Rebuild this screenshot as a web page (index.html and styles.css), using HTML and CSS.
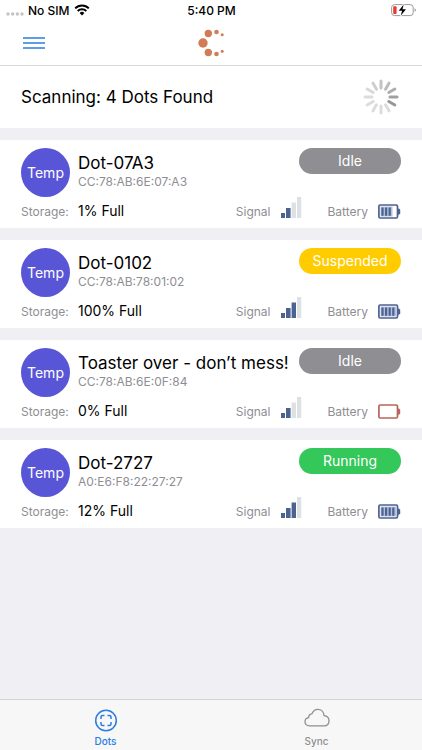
FILE: index.html
```html
<!DOCTYPE html>
<html lang="en">
<head>
<meta charset="utf-8">
<meta name="viewport" content="width=device-width, initial-scale=1">
<title>Dots</title>
<link rel="stylesheet" href="styles.css">
</head>
<body>
<svg class="defs" aria-hidden="true">
  <symbol id="bars" viewBox="0 0 21 21">
    <rect x="0" y="16" width="4" height="5"/>
    <rect x="5" y="11" width="4.6" height="10"/>
  </symbol>
  <symbol id="signal-2" viewBox="0 0 21 21">
    <use href="#bars" width="21" height="21" fill="#4c6290"/>
    <path d="M10.600 5.500h4.400V21h-4.400zM16 0h4.200v21H16z" fill="#dde1e3"/>
  </symbol>
  <symbol id="signal-3" viewBox="0 0 21 21">
    <use href="#bars" width="21" height="21" fill="#4c6290"/>
    <path d="M10.600 5.500h4.400V21h-4.400z" fill="#4c6290"/>
    <path d="M16 0h4.200v21H16z" fill="#dde1e3"/>
  </symbol>
  <symbol id="shell" viewBox="0 0 23 15">
    <rect x=".9" y="1" width="18.600" height="13" rx="1.300" fill="none" stroke="currentColor" stroke-width="1.700"/>
    <path d="M20 4.500h1l1.200 1.300v3.600L21 10.800h-1z" fill="currentColor"/>
  </symbol>
  <symbol id="battery-3" viewBox="0 0 23 15">
    <path d="M2.500 2.500h12v10h-12z" fill="#b4c0dc"/>
    <use href="#shell" width="23" height="15"/>
    <path d="M4.500 3.500v8.200M8.100 3.500v8.200M11.700 3.500v8.200" stroke="currentColor" stroke-width="2.200"/>
  </symbol>
  <symbol id="battery-4" viewBox="0 0 23 15">
    <path d="M2.500 2.500h15.500v10h-15.500z" fill="#b4c0dc"/>
    <use href="#shell" width="23" height="15"/>
    <path d="M4.500 3.500v8.200M8.100 3.500v8.200M11.700 3.500v8.200M15.300 3.500v8.200" stroke="currentColor" stroke-width="2.200"/>
  </symbol>
</svg>

<div class="app">
  <header class="top">
    <div class="status">
      <div class="carrier">
        <svg class="no-signal" viewBox="0 0 18 4" aria-hidden="true"><g fill="#c4c4c6"><circle cx="2" cy="2" r="1.700"/><circle cx="6.700" cy="2" r="1.700"/><circle cx="11.400" cy="2" r="1.700"/><circle cx="16" cy="2" r="1.700"/></g></svg>
        <span>No SIM</span>
        <svg class="wifi" viewBox="0 0 16 12" aria-hidden="true"><g fill="none" stroke="#000" stroke-width="2"><path d="M1.200 4.400a9.600 9.600 0 0 1 13.600 0"/><path d="M3.700 7a6.100 6.100 0 0 1 8.600 0"/></g><path d="M5.600 9a3.400 3.400 0 0 1 4.800 0L8 11.500z"/></svg>
      </div>
      <time class="clock">5:40 PM</time>
      <svg class="power" viewBox="0 0 26 13" aria-hidden="true"><rect x=".6" y=".6" width="21.600" height="11" rx="3" fill="none" stroke="#9a9a9d"/><path d="M23.600 4.300c1.800.8 1.800 2.800 0 3.600z" fill="#9a9a9d"/><rect x="2.200" y="2.200" width="3.400" height="7.800" rx="1" fill="#ea3a31"/><path d="M12.700.5 7.700 6.700h3.400l-1.400 5 5.300-6.400h-3.500z" stroke="#fff" stroke-width="1.500" paint-order="stroke"/></svg>
    </div>
    <nav class="nav">
      <button class="menu" aria-label="Menu">
        <svg viewBox="0 0 22 13" aria-hidden="true"><path d="M0 2h22M0 7h22M0 12h22" stroke="#2b7de0" stroke-width="1.500"/></svg>
      </button>
      <svg class="logo" viewBox="0 0 28 28" aria-hidden="true"><g fill="#d17c56"><circle cx="6" cy="14" r="4.700"/><circle cx="11.300" cy="4.500" r="3.700"/><circle cx="11.300" cy="23.500" r="3.700"/><circle cx="19.500" cy="3" r="2.300"/><circle cx="19.500" cy="25" r="2.300"/><circle cx="25.200" cy="5.800" r="1.500"/><circle cx="25.200" cy="22.200" r="1.500"/></g></svg>
    </nav>
  </header>

  <main>
    <section class="scan">
      <h1>Scanning: 4 Dots Found</h1>
      <svg class="spinner" viewBox="-18 -18 36 36" role="img" aria-label="Scanning"><g stroke-width="3" stroke-linecap="round">
        <path d="M0-9v-7" stroke="#c4c4c4"/>
        <path d="M0-9v-7" stroke="#bcbcbc" transform="rotate(30)"/>
        <path d="M0-9v-7" stroke="#adadad" transform="rotate(60)"/>
        <path d="M0-9v-7" stroke="#a0a0a2" transform="rotate(90)"/>
        <path d="M0-9v-7" stroke="#97979a" transform="rotate(120)"/>
        <path d="M0-9v-7" stroke="#dcdcdc" transform="rotate(150)"/>
        <path d="M0-9v-7" stroke="#dcdcdc" transform="rotate(180)"/>
        <path d="M0-9v-7" stroke="#dcdcdc" transform="rotate(210)"/>
        <path d="M0-9v-7" stroke="#dcdcdc" transform="rotate(240)"/>
        <path d="M0-9v-7" stroke="#dcdcdc" transform="rotate(270)"/>
        <path d="M0-9v-7" stroke="#d8d8d8" transform="rotate(300)"/>
        <path d="M0-9v-7" stroke="#cecece" transform="rotate(330)"/>
      </g></svg>
    </section>

    <article class="card">
      <div class="head">
        <span class="kind">Temp</span>
        <div class="ident"><h2>Dot-07A3</h2><p>CC:78:AB:6E:07:A3</p></div>
        <span class="state">Idle</span>
      </div>
      <div class="facts">
        <span class="label">Storage:</span><span class="value">1% Full</span>
        <div class="reading"><span class="label">Signal</span><svg class="signal" aria-hidden="true"><use href="#signal-2"/></svg></div>
        <div class="reading"><span class="label">Battery</span><svg class="battery" aria-hidden="true"><use href="#battery-3"/></svg></div>
      </div>
    </article>

    <article class="card">
      <div class="head">
        <span class="kind">Temp</span>
        <div class="ident"><h2>Dot-0102</h2><p>CC:78:AB:78:01:02</p></div>
        <span class="state suspended">Suspended</span>
      </div>
      <div class="facts">
        <span class="label">Storage:</span><span class="value">100% Full</span>
        <div class="reading"><span class="label">Signal</span><svg class="signal" aria-hidden="true"><use href="#signal-3"/></svg></div>
        <div class="reading"><span class="label">Battery</span><svg class="battery" aria-hidden="true"><use href="#battery-4"/></svg></div>
      </div>
    </article>

    <article class="card">
      <div class="head">
        <span class="kind">Temp</span>
        <div class="ident"><h2>Toaster over - don’t mess!</h2><p>CC:78:AB:6E:0F:84</p></div>
        <span class="state">Idle</span>
      </div>
      <div class="facts">
        <span class="label">Storage:</span><span class="value">0% Full</span>
        <div class="reading"><span class="label">Signal</span><svg class="signal" aria-hidden="true"><use href="#signal-2"/></svg></div>
        <div class="reading"><span class="label">Battery</span><svg class="battery low" aria-hidden="true"><use href="#shell"/></svg></div>
      </div>
    </article>

    <article class="card">
      <div class="head">
        <span class="kind">Temp</span>
        <div class="ident"><h2>Dot-2727</h2><p>A0:E6:F8:22:27:27</p></div>
        <span class="state running">Running</span>
      </div>
      <div class="facts">
        <span class="label">Storage:</span><span class="value">12% Full</span>
        <div class="reading"><span class="label">Signal</span><svg class="signal" aria-hidden="true"><use href="#signal-3"/></svg></div>
        <div class="reading"><span class="label">Battery</span><svg class="battery" aria-hidden="true"><use href="#battery-4"/></svg></div>
      </div>
    </article>
  </main>

  <nav class="tabs">
    <a class="tab current" href="#dots" aria-current="page">
      <svg viewBox="0 0 26 24" aria-hidden="true"><g fill="none" stroke="currentColor" stroke-width="1.500"><circle cx="13" cy="12.500" r="10.300"/><path d="M8 11V9Q8 7.500 9.500 7.500h2M14.500 7.500h2Q18 7.500 18 9v2M18 14v2q0 1.500-1.500 1.500h-2M11.500 17.500h-2Q8 17.500 8 16v-2"/></g></svg>
      <span>Dots</span>
    </a>
    <a class="tab" href="#sync">
      <svg viewBox="0 0 26 24" aria-hidden="true"><path d="M5.500 17.800C2.600 17.800 1 16.100 1 13.700c0-2.200 1.500-3.800 3.600-4.100C4.700 7.100 6.200 5.700 8 5.800c1.100-2.800 3.200-4.400 5.800-4.400 3.500 0 6.100 2.600 6.200 6.300 3.100.4 5 2.400 5 5 0 3-2 5.100-4.900 5.100z" fill="none" stroke="currentColor" stroke-width="1.300" stroke-linejoin="round"/></svg>
      <span>Sync</span>
    </a>
  </nav>
</div>
</body>
</html>
```
FILE: styles.css
```css
* {
  box-sizing: border-box;
}

body {
  margin: 0;
  font-family: Inter, "Liberation Sans", sans-serif;
  color: #000;
  background: #efeff4;
}

h1, h2, p {
  margin: 0;
  font-weight: 400;
}

svg {
  display: block;
  flex: none;
}

.defs {
  position: absolute;
  width: 0;
  height: 0;
}

.app {
  display: flex;
  flex-direction: column;
  min-height: 100vh;
}

.top {
  background: #fff;
  border-bottom: 1px solid #d8d8da;
}

.status {
  display: grid;
  grid-template-columns: 1fr auto 1fr;
  align-items: center;
  height: 20px;
  padding: 0 5px 0 6px;
  font-size: 12px;
  font-weight: 500;
}

.carrier {
  display: flex;
  align-items: center;
  gap: 4px;
}

.no-signal {
  width: 18px;
  height: 4px;
  margin-top: 8px;
}

.wifi {
  width: 16px;
  height: 12px;
}

.power {
  width: 26px;
  height: 13px;
  justify-self: end;
}

.nav {
  display: grid;
  grid-template-columns: 1fr auto 1fr;
  align-items: center;
  height: 45px;
  padding: 0 21px;
}

.menu {
  justify-self: start;
  padding: 2px;
  border: 0;
  background: none;
}

.menu svg {
  width: 22px;
  height: 13px;
}

.logo {
  width: 28px;
  height: 28px;
}

.scan {
  display: flex;
  align-items: center;
  justify-content: space-between;
  height: 62px;
  padding: 0 23px 0 21px;
  background: #fff;
}

.scan h1 {
  font-size: 17px;
}

.spinner {
  width: 36px;
  height: 36px;
}

.card {
  margin-top: 12px;
  padding: 8px 21px 7px;
  background: #fff;
}

.head {
  display: flex;
  align-items: flex-start;
  gap: 8px;
}

.kind {
  flex: none;
  width: 49px;
  height: 49px;
  border-radius: 50%;
  background: #5856d6;
  color: #fff;
  font-size: 14px;
  line-height: 49px;
  text-align: center;
}

.ident {
  flex: 1;
  min-width: 0;
  padding-top: 4px;
  white-space: nowrap;
}

.ident h2 {
  font-size: 17px;
  line-height: 22px;
}

.ident p {
  color: #8e8e93;
  font-size: 12px;
  line-height: 16px;
}

.state {
  flex: none;
  width: 102px;
  border-radius: 13px;
  background: #8e8e93;
  color: #fff;
  font-size: 14px;
  line-height: 26px;
  text-align: center;
}

.suspended {
  background: #fc0;
}

.running {
  background: #34c759;
}

.facts {
  display: flex;
  align-items: flex-end;
  height: 24px;
  white-space: nowrap;
}

.label {
  color: #8e8e93;
  font-size: 12px;
  line-height: 18px;
}

.value {
  flex: 1;
  font-size: 14px;
  line-height: 20px;
}

.facts > .label {
  width: 57px;
}

.reading {
  display: flex;
  align-items: flex-end;
  gap: 10px;
}

.reading + .reading {
  margin-left: 26px;
}

.signal {
  width: 21px;
  height: 21px;
  margin-bottom: 3px;
}

.battery {
  width: 23px;
  height: 15px;
  margin-bottom: 2px;
  color: #4c6290;
}

.low {
  color: #b8665c;
}

.tabs {
  display: flex;
  margin-top: auto;
  border-top: 1px solid #d3d3d6;
  background: #f7f7f7;
}

.tab {
  display: flex;
  flex: 1;
  flex-direction: column;
  align-items: center;
  gap: 2px;
  height: 50px;
  padding-top: 8px;
  color: #8e8e93;
  font-size: 10px;
  font-weight: 500;
  line-height: 14px;
  text-decoration: none;
}

.tab svg {
  width: 26px;
  height: 24px;
}

.current {
  color: #2b7de0;
}
```
